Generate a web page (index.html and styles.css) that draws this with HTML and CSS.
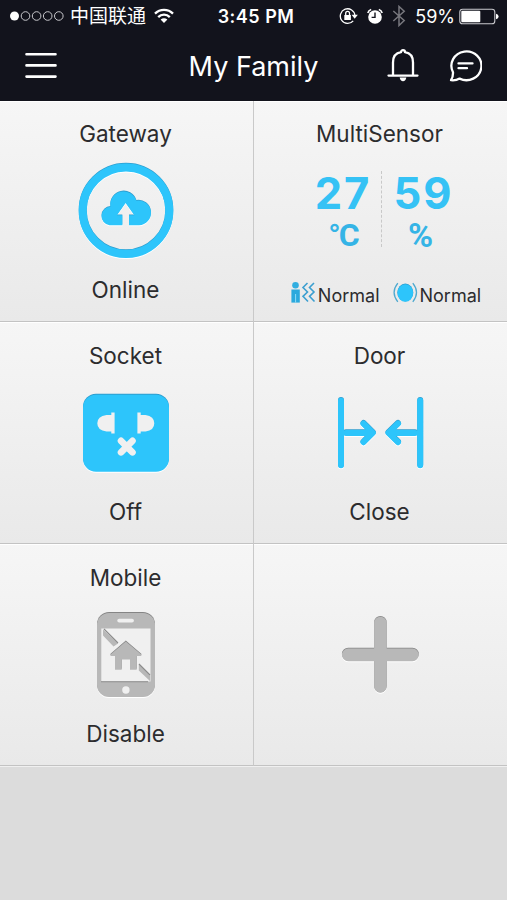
FILE: index.html
```html
<!DOCTYPE html>
<html lang="en">
<head>
  <meta charset="UTF-8" />
  <meta name="viewport" content="width=device-width, initial-scale=1.0"/>
  <title>My Family</title>
  <link rel="stylesheet" href="styles.css">
</head>
<body>

  <header class="header">
    <div class="status-bar">
      <div class="status-left">
        <svg class="signal" width="54" height="12" viewBox="0 0 54 12">
          <circle class="filled" cx="4.5" cy="6" r="4.5"/>
          <circle cx="15.5" cy="6" r="4.3"/>
          <circle cx="26.6" cy="6" r="4.3"/>
          <circle cx="37.7" cy="6" r="4.3"/>
          <circle cx="48.8" cy="6" r="4.3"/>
        </svg>
        <span class="carrier">中国联通</span>
        <svg class="wifi" width="20" height="16" viewBox="0 0 20 16">
          <path d="M1 5.6C6 .6 14 .6 19 5.6M4.2 9.1C7.4 5.9 12.6 5.9 15.8 9.1"/>
          <path class="dot" d="M6.6 11.6Q10 8.8 13.4 11.6L10 15z"/>
        </svg>
      </div>
      <div class="time">3:45 PM</div>
      <div class="status-right">
        <svg width="20" height="18" viewBox="0 0 20 18" fill="none" stroke="#fff" stroke-width="1.3">
          <path d="M14.2 13.8A7.3 7.3 0 1 1 15.9 8.5"/>
          <path d="M12.6 7.8h6.2l-3.1 4z" fill="#fff" stroke="none"/>
          <rect x="5.3" y="8" width="6.6" height="5" fill="#fff" stroke="none"/>
          <path d="M6.7 8V6.3a1.9 1.9 0 0 1 3.8 0V8"/>
        </svg>
        <svg class="alarm" width="16" height="17" viewBox="0 0 16 17">
          <circle cx="8" cy="9" r="6.8" fill="#fff"/>
          <path d="M.8 5A5 5 0 0 1 4.2 1.6M15.2 5A5 5 0 0 0 11.8 1.6" stroke="#fff" stroke-width="1.6" fill="none"/>
          <path d="M8 4.6V9.4H4.6" stroke="#12131c" stroke-width="1.4" fill="none"/>
        </svg>
        <svg class="bluetooth" width="14" height="22" viewBox="0 0 14 22">
          <path d="M1.3 6L12.2 15.5 7 20.5V1.5L12.2 6.3 1.3 16"/>
        </svg>
        <span class="percent">59%</span>
        <svg class="battery" width="40" height="17" viewBox="0 0 40 17">
          <rect x=".8" y="1.3" width="35" height="14.4" rx="2.8" fill="none" stroke="#c9c9cd" stroke-width="1.1"/>
          <rect x="2.3" y="2.8" width="19" height="11.4" rx="1" fill="#fff"/>
          <path d="M37 5.8q2.6 .6 2.6 2.7t-2.6 2.7z" fill="#fff"/>
        </svg>
      </div>
    </div>
    <div class="nav-bar">
      <svg class="menu" width="32" height="29" viewBox="0 0 32 29">
        <path d="M1.5 2.2H30.5M1.5 13.4H30.5M1.5 24.6H30.5"/>
      </svg>
      <h1>My Family</h1>
      <div class="nav-icons">
        <svg width="32" height="34" viewBox="0 0 32 34">
          <path d="M1.5 26.6H30.5M6 26.2V13.4C6 7.6 9.2 4 14 3.2a2 2 0 0 1 4 0C22.8 4 26 7.6 26 13.4V26.2"/>
          <path d="M12.7 28.5H19.3Q18.6 32.3 16 32.3T12.7 28.5z" fill="#fff" stroke="none"/>
        </svg>
        <svg width="34" height="34" viewBox="0 0 34 34">
          <path d="M5 23.2A15 14.4 0 1 1 11.6 29.6Q8 31.7 3 31.2Q5.2 28 5 23.2zM10.5 14.4H24.5M10.5 19.2H19"/>
        </svg>
      </div>
    </div>
  </header>

  <main class="devices">
    <section class="tile">
      <h2>Gateway</h2>
      <svg class="icon" width="140" height="126" viewBox="56 149 140 126">
        <defs>
          <path id="cloud" d="M109.5 224.5A9.3 9.3 0 0 1 110.4 206A13.4 13.4 0 0 1 136.4 199.9A12.4 12.4 0 1 1 139 224.5H129V214.5H134.3L125.6 202.3 117 214.5H122.3V224.5z"/>
        </defs>
        <circle class="ring shade" cx="126" cy="210" r="43.3"/>
        <circle class="ring" cx="126" cy="210.8" r="43.3"/>
        <use class="shade" href="#cloud"/>
        <use href="#cloud" y=".8"/>
      </svg>
      <p>Online</p>
    </section>

    <section class="tile">
      <h2>MultiSensor</h2>
      <div class="readings">
        <div class="reading">
          <strong>27</strong>
          <span class="unit">°C</span>
        </div>
        <div class="reading">
          <strong>59</strong>
          <span class="unit humidity">%</span>
        </div>
      </div>
      <div class="alerts">
        <svg width="26" height="24" viewBox="0 0 26 24">
          <circle cx="5.5" cy="4.2" r="3.3" fill="#31aee0"/>
          <path d="M1.4 8.5H9.8V21.6H1.4z" fill="#2ba9dd"/>
          <path d="M5.6 13v8.6" stroke="#8fdcf8" stroke-width="1"/>
          <path d="M17.5 2L13 6.5 17.5 11 13 15.3 18 20.5M24 2L19.5 6.5 24 11 19.5 15.3 24.5 20.5" fill="none" stroke="#3c9fd0" stroke-width="1.6"/>
        </svg>
        <span>Normal</span>
        <svg class="vibration" width="25" height="24" viewBox="0 0 25 24">
          <ellipse cx="12.3" cy="11.5" rx="8" ry="9" fill="#2f9dce"/>
          <ellipse cx="12.3" cy="12" rx="7.8" ry="8.8" fill="#2dc5fb"/>
          <path d="M4.8 2.2Q-2.6 11.5 4.8 20.8M19.8 2.2Q27.2 11.5 19.8 20.8" fill="none" stroke="#4fa9cf" stroke-width="1.3"/>
        </svg>
        <span>Normal</span>
      </div>
    </section>

    <section class="tile">
      <h2>Socket</h2>
      <svg class="icon" width="140" height="126" viewBox="56 370 140 126">
        <rect class="shade" x="83" y="392.8" width="86" height="77" rx="13"/>
        <rect x="83" y="393.7" width="86" height="77" rx="13"/>
        <g class="cutout">
          <path d="M111.3 411.5H114.6V432.5H111.3V430.5H106.5Q97.3 429.5 97.3 422.3T106.5 413.9H111.3z"/>
          <path d="M140.7 411.5H137.4V432.5H140.7V430.5H145.5Q154.3 429.5 154.3 422.3T145.5 413.9H140.7z"/>
          <path class="cross" d="M121 439.8L132.5 451.3M132.5 439.8L121 451.3"/>
        </g>
      </svg>
      <p>Off</p>
    </section>

    <section class="tile">
      <h2>Door</h2>
      <svg class="icon" width="140" height="126" viewBox="310 370 140 126">
        <defs>
          <g id="door">
            <path d="M341 399V463.5M420.2 399V463.5M346 431.2H372M363.5 422L372.8 431.2 363.5 440.5M415 431.2H389M398 422L388.5 431.2 398 440.5"/>
          </g>
        </defs>
        <use class="line shade" href="#door"/>
        <use class="line" href="#door" y=".7"/>
      </svg>
      <p>Close</p>
    </section>

    <section class="tile disabled">
      <h2>Mobile</h2>
      <svg class="icon" width="140" height="126" viewBox="56 592 140 126">
        <defs>
          <path id="house" d="M125.8 640.5L141.3 653.7V655H136.7V668.8H130V658.5H121.7V668.8H115V655H110.5V653.7z"/>
        </defs>
        <rect class="shade" x="97" y="611" width="58" height="84" rx="12"/>
        <rect x="97" y="612" width="58" height="84" rx="12"/>
        <path class="cutout" d="M101.3 627.5H150.5V680.5H101.3z"/>
        <path class="edge" d="M101 680.8H148"/>
        <rect class="cutout" x="117.3" y="617.7" width="16.6" height="3.8" rx="1.9"/>
        <circle class="cutout" cx="125.9" cy="689" r="3.7"/>
        <path d="M103 628.5L118 642.5 113.5 645.5 103 634.5zM138.8 663L150 674.5V680L138.8 669.5z"/>
        <path class="edge" d="M104 628L118 642M139 663L150 674"/>
        <use class="shade" href="#house" y="-1"/>
        <use href="#house" y="-.1"/>
      </svg>
      <p>Disable</p>
    </section>

    <section class="tile disabled">
      <svg class="icon plus" width="140" height="126" viewBox="310 592 140 126">
        <path class="shade" d="M380.4 621.2V685M348.2 653H412.5"/>
        <path d="M380.4 622V685.4M348.2 653.9H412.5"/>
      </svg>
    </section>
  </main>

</body>
</html>
```

FILE: styles.css
```css
* {
  box-sizing: border-box;
}
body {
  font-family: Inter, "Noto Sans CJK SC", sans-serif;
  background-color: #dcdcdc;
  color: #2c2c2e;
  margin: 0;
}
h1, h2, p {
  margin: 0;
  font-weight: 400;
}
svg {
  display: block;
  flex-shrink: 0;
}

.header {
  height: 101px;
  background-color: #12131c;
  color: white;
}
.status-bar {
  display: grid;
  grid-template-columns: 1fr auto 1fr;
  align-items: center;
  height: 32px;
  padding: 0 8px 0 10px;
  font-size: 18px;
}
.status-left, .status-right {
  display: flex;
  align-items: center;
}
.status-right {
  justify-content: flex-end;
}
.signal circle {
  fill: none;
  stroke: #c8c8cc;
  stroke-width: 1;
}
.signal .filled {
  fill: white;
  stroke: none;
}
.carrier {
  margin-left: 6px;
  padding-top: 2px;
  font-size: 19px;
  line-height: 30px;
}
.wifi {
  margin-left: 8px;
  fill: none;
  stroke: white;
  stroke-width: 2.3;
}
.wifi .dot {
  fill: white;
  stroke: none;
}
.time {
  font-weight: 600;
  letter-spacing: 0.5px;
  white-space: nowrap;
  margin-left: 3px;
}
.alarm {
  margin-left: 8px;
}
.bluetooth {
  margin-left: 9px;
  fill: none;
  stroke: #77777d;
  stroke-width: 1.5;
}
.percent {
  margin-left: 9px;
}
.battery {
  margin-left: 4px;
}

.nav-bar {
  display: grid;
  grid-template-columns: 1fr auto 1fr;
  align-items: center;
  height: 68px;
  padding: 0 25px 0 25px;
}
.nav-bar svg {
  fill: none;
  stroke: white;
  stroke-width: 2.3;
  stroke-linecap: round;
  stroke-linejoin: round;
}
.nav-bar .menu {
  stroke-width: 2.6;
}
.nav-bar h1 {
  font-size: 27px;
}
.nav-icons {
  display: flex;
  justify-content: flex-end;
  gap: 29px;
}

.devices {
  display: grid;
  grid-template-columns: 254px 253px;
  grid-template-rows: 221px 222px 222px;
  border-bottom: 1px solid #f0f0f0;
}
.tile {
  display: flex;
  flex-direction: column;
  align-items: center;
  justify-content: flex-end;
  padding: 0 2px 16px 0;
  background: linear-gradient(#f6f6f6, #e9e9e9);
  border-bottom: 1px solid #c3c3c3;
  box-shadow: inset 0 1px 0 white;
}
.tile:nth-child(odd) {
  border-right: 1px solid #c9c9c9;
}
.tile h2, .tile p {
  font-size: 22.5px;
  line-height: 30px;
}

.icon {
  fill: #2dc5fb;
  stroke: none;
  filter: drop-shadow(0 1px 0 white);
}
.icon .shade {
  fill: #2f9dce;
}
.icon .ring {
  fill: none;
  stroke: #2dc5fb;
  stroke-width: 8;
}
.icon .ring.shade {
  stroke: #2f9dce;
}
.icon .cutout {
  fill: #f0f0f0;
}
.icon .cross {
  stroke: #f0f0f0;
  stroke-width: 6.6;
  stroke-linecap: round;
}
.icon .line {
  fill: none;
  stroke: #2dc5fb;
  stroke-width: 6;
  stroke-linecap: round;
  stroke-linejoin: round;
}
.icon .line.shade {
  stroke: #2f9dce;
}
.disabled .icon {
  fill: #b8b8b8;
}
.disabled .shade {
  fill: #858585;
}
.disabled .edge {
  stroke: #8c8c8c;
  stroke-width: 1.1;
}
.plus {
  stroke: #b8b8b8;
  stroke-width: 12.6;
  stroke-linecap: round;
  margin-bottom: 30px;
}
.plus .shade {
  stroke: #858585;
}

.readings {
  display: flex;
  height: 76px;
  margin: 22px 0 34px 11px;
}
.reading {
  display: flex;
  flex-direction: column;
  align-items: center;
  width: 76px;
  color: #35c2f5;
}
.reading + .reading {
  width: 84px;
  border-left: 1px dashed #c8c8c8;
}
.reading strong {
  font-size: 43.5px;
  line-height: 44px;
  letter-spacing: 2px;
}
.unit {
  font: 700 32px/40px Roboto, sans-serif;
  letter-spacing: -2px;
  color: #35b4e6;
}
.unit.humidity {
  font-size: 34px;
  letter-spacing: 0;
  margin-right: 6px;
}
.alerts {
  display: flex;
  align-items: center;
  height: 20px;
  margin: 2px 0 2px 12px;
  font-size: 18px;
}
.alerts span {
  margin-left: 2px;
  padding-top: 5px;
}
.vibration {
  margin-left: 13px;
}
```
